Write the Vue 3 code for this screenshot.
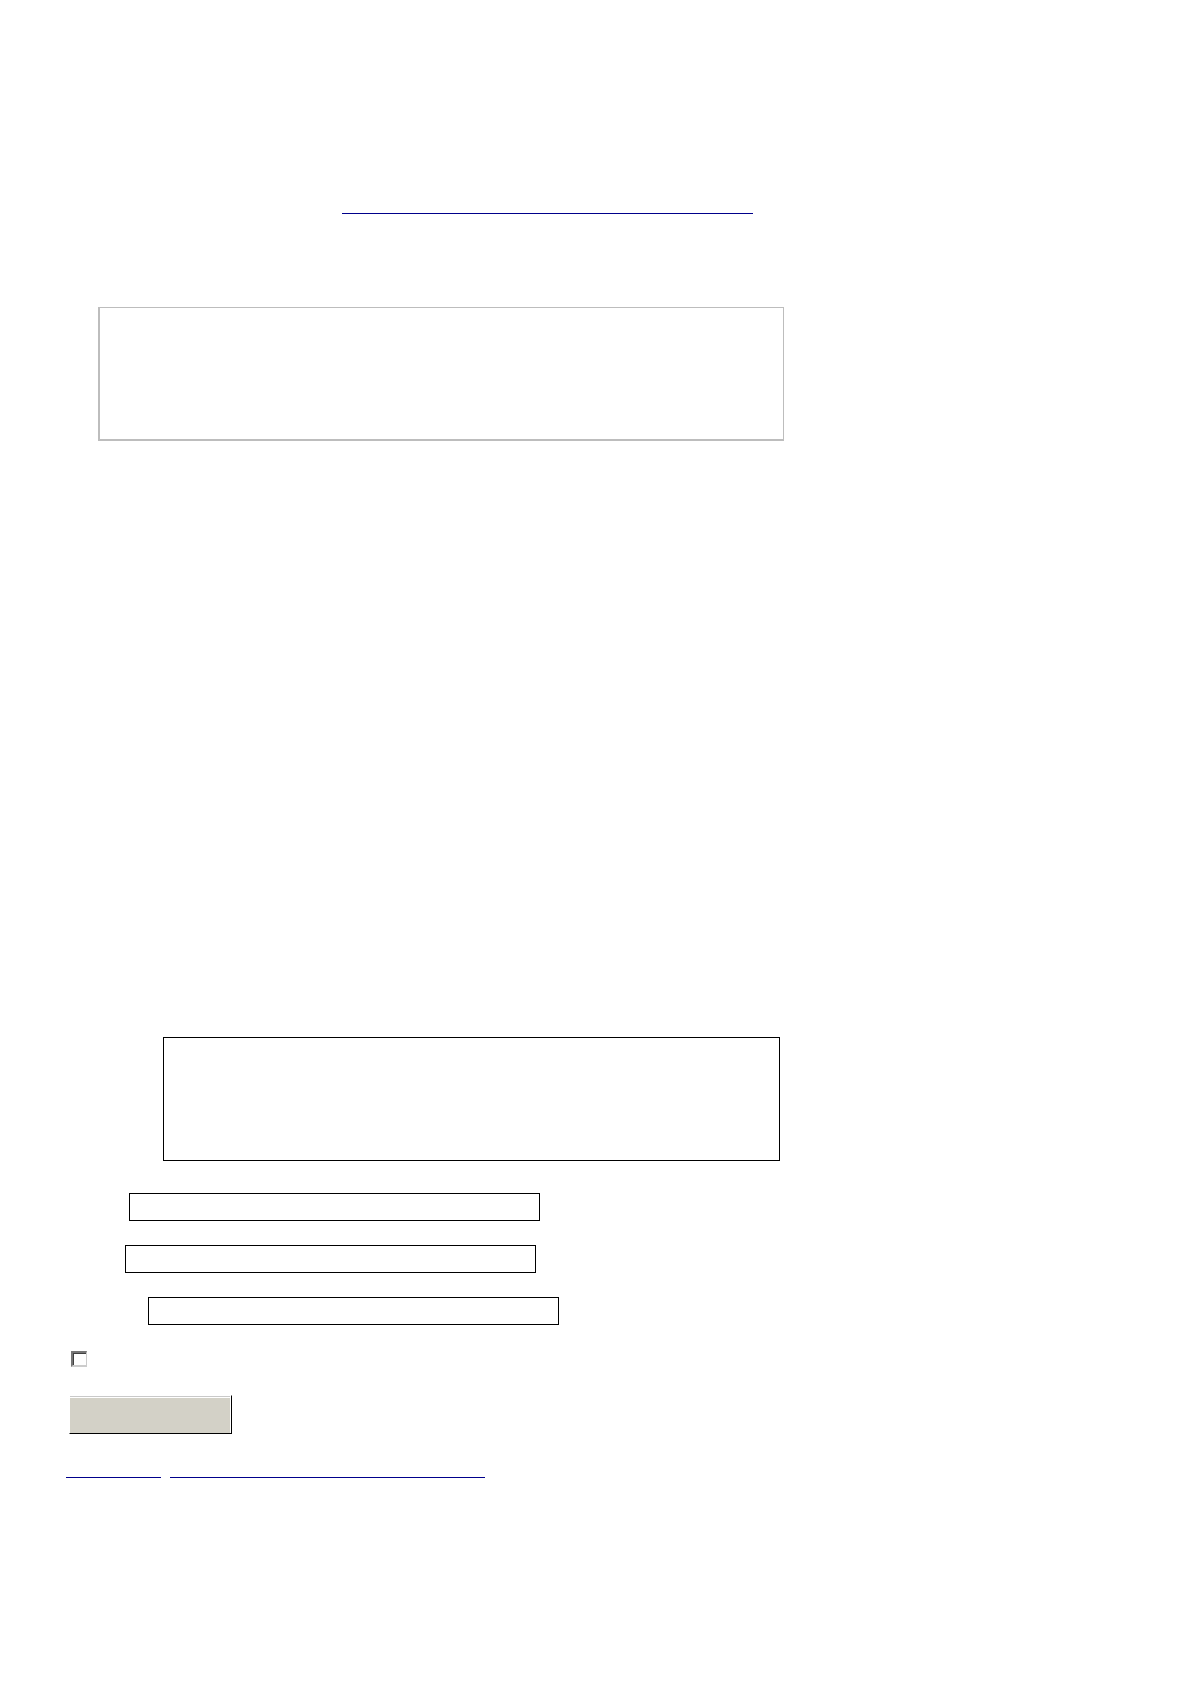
<script setup>
import { ref } from 'vue'

const comment = ref('')
const remember = ref(false)
const fields = ref([
    { id: 'name', label: 'Name', value: '' },
    { id: 'email', label: 'Email', value: '' },
    { id: 'website', label: 'Website', value: '' },
])
</script>

<template>
    <main class="page">
        <header class="intro">
            <a class="link link-intro" href="#post" aria-label="Post"></a>
        </header>

        <blockquote id="post" class="quote"></blockquote>

        <form class="comment-form" @submit.prevent>
            <div class="row row-comment">
                <label class="label label-comment" for="comment"></label>
                <textarea id="comment" v-model="comment" class="comment" aria-label="Comment"></textarea>
            </div>
            <div v-for="field in fields" :key="field.id" class="row">
                <label class="label" :class="`label-${field.id}`" :for="field.id"></label>
                <input :id="field.id" v-model="field.value" class="field" type="text" :aria-label="field.label" />
            </div>
            <input v-model="remember" class="remember" type="checkbox" aria-label="Remember me" />
            <button class="submit" type="submit" aria-label="Submit"></button>
        </form>

        <nav class="footer">
            <a class="link link-previous" href="#previous" aria-label="Previous"></a>
            <a class="link link-next" href="#next" aria-label="Next"></a>
        </nav>
    </main>
</template>

<style>
body {
    margin: 0;
    background: #fff;
}
</style>

<style scoped>
.page {
    box-sizing: border-box;
    max-width: 784px;
    padding: 213px 0 206px 66px;
    font-family: "Liberation Serif", serif;
    font-size: 16px;
}

.intro {
    display: flex;
    padding-left: 276px;
}

.link {
    height: 1px;
    background: #00008b;
}

.link-intro {
    width: 411px;
}

.quote {
    box-sizing: border-box;
    height: 134px;
    margin: 93px 0 0 32px;
    border: solid #bdbdbd;
    border-width: 1px 1px 2px 2px;
}

.comment-form {
    display: flex;
    flex-direction: column;
    align-items: flex-start;
    gap: 24px;
    margin-top: 596px;
}

.row {
    display: flex;
    width: 100%;
}

.row-comment {
    box-sizing: border-box;
    padding-right: 4px;
    margin-bottom: 8px;
}

.label {
    flex: none;
}

.label-comment {
    width: 97px;
}

.label-name {
    width: 63px;
}

.label-email {
    width: 59px;
}

.label-website {
    width: 82px;
}

.comment,
.field {
    box-sizing: border-box;
    min-width: 0;
    margin: 0;
    padding: 4px;
    border: 1px solid #000;
    border-radius: 0;
    outline: none;
    background: #fff;
    font: inherit;
}

.comment {
    flex: 1;
    height: 124px;
    resize: none;
}

.field {
    width: 411px;
    height: 28px;
}

.remember {
    box-sizing: border-box;
    width: 16px;
    height: 16px;
    margin: 2px 0 4px 5px;
    border: 2px solid;
    border-color: #757575 #ccc #ccc #757575;
    border-right-width: 1px;
    appearance: none;
    background: #fff;
    box-shadow: inset 1px 1px #404040;
}

.submit {
    box-sizing: border-box;
    width: 163px;
    height: 39px;
    margin-left: 3px;
    padding: 0;
    border: solid;
    border-width: 1px 1px 1px 1px;
    border-color: #fff #000 #000 #fff;
    border-radius: 0;
    background: #d3d1c7;
    box-shadow: inset -1px 0 #fff, inset 0 1px #c9c9c9, inset 0 2px #fff;
}

.footer {
    display: flex;
    gap: 9px;
    margin-top: 43px;
}

.link-previous {
    width: 95px;
}

.link-next {
    width: 315px;
}
</style>
